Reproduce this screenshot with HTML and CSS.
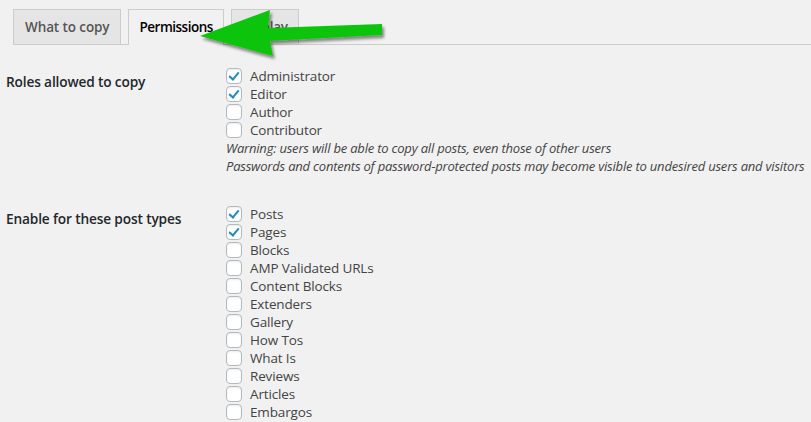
FILE: index.html
```html
<!DOCTYPE html>
<html>
<head>
<meta charset="utf-8">
<link rel="stylesheet" href="styles.css">
</head>
<body>
<div class="page">
  <nav class="tabs">
    <span class="tab">What to copy</span>
    <span class="tab active">Permissions</span>
    <span class="tab">Display</span>
  </nav>

  <section class="row first">
    <div class="label">Roles allowed to copy</div>
    <div class="field">
      <label class="opt"><span class="cb on"></span>Administrator</label>
      <label class="opt"><span class="cb on"></span>Editor</label>
      <label class="opt"><span class="cb"></span>Author</label>
      <label class="opt"><span class="cb"></span>Contributor</label>
      <p class="note">Warning: users will be able to copy all posts, even those of other users</p>
      <p class="note">Passwords and contents of password-protected posts may become visible to undesired users and visitors</p>
    </div>
  </section>

  <section class="row second">
    <div class="label">Enable for these post types</div>
    <div class="field">
      <label class="opt"><span class="cb on"></span>Posts</label>
      <label class="opt"><span class="cb on"></span>Pages</label>
      <label class="opt"><span class="cb"></span>Blocks</label>
      <label class="opt"><span class="cb"></span>AMP Validated URLs</label>
      <label class="opt"><span class="cb"></span>Content Blocks</label>
      <label class="opt"><span class="cb"></span>Extenders</label>
      <label class="opt"><span class="cb"></span>Gallery</label>
      <label class="opt"><span class="cb"></span>How Tos</label>
      <label class="opt"><span class="cb"></span>What Is</label>
      <label class="opt"><span class="cb"></span>Reviews</label>
      <label class="opt"><span class="cb"></span>Articles</label>
      <label class="opt"><span class="cb"></span>Embargos</label>
    </div>
  </section>

  <svg class="arrow" width="811" height="80" viewBox="0 0 811 80" xmlns="http://www.w3.org/2000/svg">
    <defs>
      <filter id="sh" x="-10%" y="-30%" width="130%" height="170%">
        <feGaussianBlur in="SourceAlpha" stdDeviation="1.6"/>
        <feOffset dx="2" dy="3" result="b"/>
        <feComponentTransfer><feFuncA type="linear" slope="0.45"/></feComponentTransfer>
        <feMerge><feMergeNode/><feMergeNode in="SourceGraphic"/></feMerge>
      </filter>
    </defs>
    <polygon filter="url(#sh)" fill="#0cc40c" points="200,36 270,10 268,28 382,24 382,35 270,41 273,56"/>
  </svg>
</div>
</body>
</html>
```

FILE: styles.css
```css
html, body {
  margin: 0;
  padding: 0;
  background: #f1f1f1;
}
body {
  font-family: "Open Sans", "Noto Sans", "Liberation Sans", sans-serif;
  color: #444;
  width: 811px;
  height: 422px;
  overflow: hidden;
}
.page {
  position: relative;
}
.tabs {
  display: flex;
  gap: 7px;
  margin-left: 13px;
  padding-top: 9px;
  border-bottom: 1px solid #ccc;
  height: 35px;
  box-sizing: content-box;
}
.tab {
  display: block;
  height: 24px;
  line-height: 24px;
  padding: 5px 10px;
  border: 1px solid #ccc;
  border-bottom: none;
  background: #e5e5e5;
  color: #555;
  font-size: 13.5px;
  font-weight: 600;
  letter-spacing: -0.2px;
}
.tab:first-child {
  padding: 5px 11px;
  letter-spacing: -0.1px;
}
.tab.active {
  background: #f1f1f1;
  color: #000;
  height: 25px;
  margin-bottom: -1px;
  letter-spacing: -0.5px;
}
.row {
  display: grid;
  grid-template-columns: 226px 1fr;
}
.row.first { margin-top: 22px; }
.row.second { margin-top: 30px; }
.label {
  padding-left: 6px;
  padding-top: 6px;
  font-size: 13.7px;
  font-weight: 600;
  color: #23282d;
  line-height: 18px;
  letter-spacing: -0.15px;
}
.second .label {
  padding-top: 5px;
}
.field {
  display: flex;
  flex-direction: column;
}
.opt {
  display: flex;
  align-items: center;
  gap: 8px;
  height: 18px;
  font-size: 13.5px;
  letter-spacing: -0.15px;
  color: #444;
}
.cb {
  width: 14px;
  height: 14px;
  border: 1px solid #b4b9be;
  border-radius: 4px;
  background: #fff;
  flex: none;
  position: relative;
  box-shadow: inset 0 1px 2px rgba(0,0,0,0.08);
}
.cb.on::after {
  content: "";
  position: absolute;
  left: 4px;
  top: 1px;
  width: 4px;
  height: 8px;
  border: solid #1e8cbe;
  border-width: 0 2.5px 2.5px 0;
  transform: rotate(40deg);
}
.note {
  margin: 0;
  height: 18px;
  line-height: 18px;
  font-size: 13px;
  font-style: italic;
  letter-spacing: -0.2px;
  color: #444;
}
.arrow {
  position: absolute;
  left: 0;
  top: 0;
  pointer-events: none;
}
```
